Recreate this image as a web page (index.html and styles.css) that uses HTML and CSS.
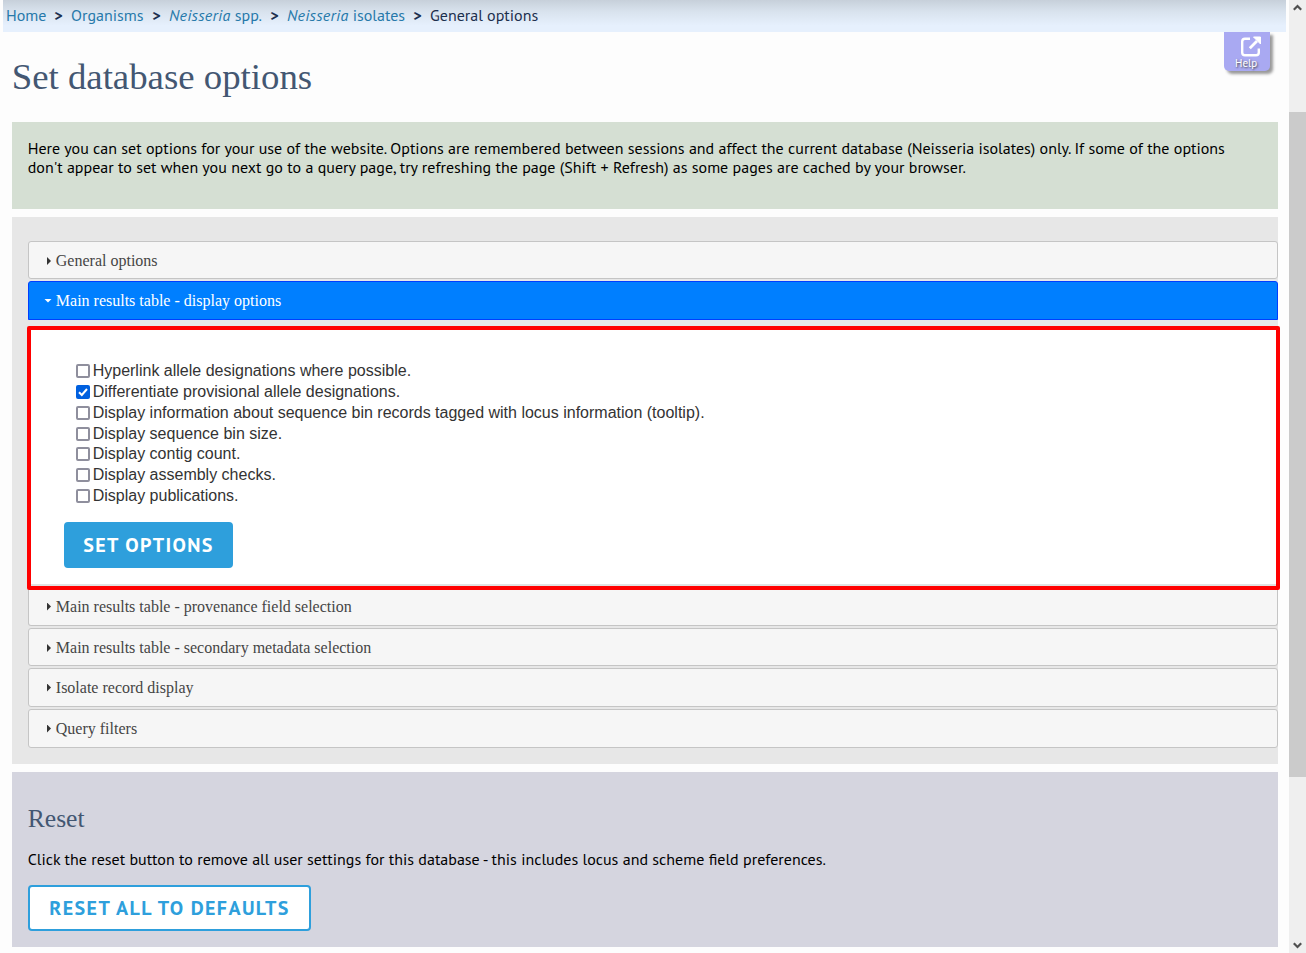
FILE: index.html
```html
<!DOCTYPE html>
<html lang="en">
<head>
<meta charset="utf-8">
<title>Set database options</title>
<link rel="stylesheet" href="styles.css">
</head>
<body>
<div class="page">
  <nav class="breadcrumb">
    <a class="c1">Home</a><b>&gt;</b><a class="c2">Organisms</a><b>&gt;</b><a class="c3"><i>Neisseria</i> spp.</a><b>&gt;</b><a class="c4"><i>Neisseria</i> isolates</a><b>&gt;</b><span class="c5">General options</span>
  </nav>
  <a class="help">
    <svg width="22" height="22" viewBox="0 0 22 22" fill="none" stroke="#fff" stroke-width="2.4"><path d="M10 2.700H5Q2.200 2.700 2.200 5.500v11q0 2.800 2.800 2.800h11q2.800 0 2.800-2.800V12.500"/><path d="M9.800 12.200 17 5" stroke-width="2.800"/><path d="M13.500 1h7v7z" fill="#fff" stroke-width="1" stroke-linejoin="round"/></svg>
    <span>Help</span>
  </a>
  <h1>Set database options</h1>
  <section class="intro">
    <p class="l1">Here you can set options for your use of the website. Options are remembered between sessions and affect the current database (Neisseria isolates) only. If some of the options</p>
    <p class="l2">don't appear to set when you next go to a query page, try refreshing the page (Shift + Refresh) as some pages are cached by your browser.</p>
  </section>
  <section class="options">
    <h3 class="bar"><i class="tri"></i><span>General options</span></h3>
    <h3 class="bar active"><i class="tri down"></i><span>Main results table - display options</span></h3>
    <div class="panel">
      <ul>
        <li><i class="box"></i>Hyperlink allele designations where possible.</li>
        <li><i class="box on"><svg width="14" height="14" viewBox="0 0 14 14"><path d="M3 7.300 5.800 10 11 4" fill="none" stroke="#fff" stroke-width="2"/></svg></i>Differentiate provisional allele designations.</li>
        <li><i class="box"></i>Display information about sequence bin records tagged with locus information (tooltip).</li>
        <li><i class="box"></i>Display sequence bin size.</li>
        <li><i class="box"></i>Display contig count.</li>
        <li><i class="box"></i>Display assembly checks.</li>
        <li><i class="box"></i>Display publications.</li>
      </ul>
      <button class="btn set"><span>SET OPTIONS</span></button>
    </div>
    <h3 class="bar cut"><i class="tri"></i><span>Main results table - provenance field selection</span></h3>
    <h3 class="bar"><i class="tri"></i><span>Main results table - secondary metadata selection</span></h3>
    <h3 class="bar tall"><i class="tri"></i><span>Isolate record display</span></h3>
    <h3 class="bar tall"><i class="tri"></i><span>Query filters</span></h3>
  </section>
  <section class="reset">
    <h2>Reset</h2>
    <p class="l3">Click the reset button to remove all user settings for this database - this includes locus and scheme field preferences.</p>
    <button class="btn all"><span>RESET ALL TO DEFAULTS</span></button>
  </section>
</div>
<div class="scrollbar">
  <svg width="17" height="17" viewBox="0 0 17 17"><path d="M4.800 9.800 8.500 6l3.700 3.800" fill="none" stroke="#505050" stroke-width="2.200"/></svg>
  <div class="thumb"></div>
  <svg width="17" height="17" viewBox="0 0 17 17"><path d="M4.800 7.200 8.500 11l3.700-3.800" fill="none" stroke="#505050" stroke-width="2.200"/></svg>
</div>
</body>
</html>
```
FILE: styles.css
```css
* { box-sizing: border-box; }
body { margin: 0; display: flex; width: 1306px; height: 953px; overflow: hidden; background: #fdfdfd; font: 16px/19px "PT Sans", "Noto Sans", sans-serif; color: #000; }
h1, h2, h3, p, ul { margin: 0; padding: 0; font-weight: normal; }
p, .breadcrumb, span { white-space: nowrap; }
p { margin-left: -0.3px; word-spacing: 0.08px; }
.page { position: relative; width: 1289px; height: 953px; flex: none; }
.breadcrumb { display: flex; width: 1283px; height: 32px; margin-left: 3px; padding: 6px 0 0 3px; background: linear-gradient(#c7d0da, #d8e2ed 35%, #e6f0fd 80%); color: #1c2f4e; }
.breadcrumb a { color: #2779aa; }
.breadcrumb a i { letter-spacing: 0.26px; }
.breadcrumb a, .breadcrumb span { flex: none; }
.breadcrumb b { width: 25px; text-align: center; }
.c1 { width: 40px; }
.c2 { width: 73px; }
.c3 { width: 93px; }
.c4 { width: 118px; }
.help { position: absolute; left: 1224px; top: 32px; width: 46px; height: 39px; border-radius: 0 0 5px 5px; background: #a9a9f2; box-shadow: 3px 3px 3px #999; color: #fff; }
.help svg { position: absolute; left: 16px; top: 4px; }
.help span { position: absolute; left: 11px; top: 24px; font-size: 11px; line-height: 14px; text-shadow: 1px 1px 2px #444; }
h1 { height: 90px; padding: 24px 0 0 11.700px; font: 36.800px/42px "Liberation Serif", serif; color: #435772; }
section { width: 1266px; margin-left: 12px; padding-left: 16px; }
.intro { height: 87px; padding-top: 17px; background: #d5dfd3; }
.options { height: 547px; margin-top: 8px; padding-top: 24px; background: #e7e7e7; }
.bar { display: flex; align-items: center; width: 1250px; height: 38px; margin-bottom: 2px; padding: 2px 0 0 16px; border: 1px solid #c5c5c5; border-radius: 3px; background: #f6f6f6; color: #454545; font: 16px/20px "Liberation Serif", serif; }
.bar.active { height: 39px; margin-bottom: 0; padding-top: 0; border-color: #003eff; border-radius: 3px 3px 0 0; background: #007fff; color: #fff; }
.bar.cut { height: 36px; padding-top: 0; padding-bottom: 2px; border-top: 0; border-radius: 0 0 3px 3px; }
.bar.tall { height: 39px; padding-top: 0; }
.tri { flex: none; width: 4px; height: 8px; margin: 0 4.800px 0 2px; background: #333; clip-path: polygon(0 0, 100% 50%, 0 100%); }
.tri.down { width: 8px; height: 4px; margin: 0 3.800px 0 -1px; background: #fff; clip-path: polygon(0 0, 100% 0, 50% 100%); }
.panel { width: 1253px; height: 264px; margin: 6px 0 0 -1px; padding: 31px 0 0 33px; border: 4px solid #f00; border-radius: 2px; background: #fff; box-shadow: inset 0 -2px #e1e2e2; }
ul { height: 161px; padding-left: 12px; list-style: none; font: 16px/20.850px "Liberation Sans", sans-serif; color: #333; }
li { display: flex; align-items: center; height: 20.850px; white-space: nowrap; }
.box { flex: none; width: 14px; height: 14px; margin: 0 2.700px 0.700px 0; border: 2px solid #8f8f9d; border-radius: 2px; }
.box.on { border: 0; background: #0060df; }
.box svg { display: block; }
.btn { display: block; height: 46px; padding: 0; border: 2px solid #2e9fdc; border-radius: 4px; font: bold 20px/42px "PT Sans", "Noto Sans", sans-serif; letter-spacing: 1.400px; text-align: center; }
.set { width: 169px; background: #2e9fdc; color: #fff; }
.all { width: 283px; margin-top: 16px; background: #fff; color: #2e9fdc; }
.reset { height: 175px; margin-top: 8px; padding-top: 32px; background: #d5d5df; }
h2 { height: 46px; margin-left: -0.300px; font: 25.600px/30px "Liberation Serif", serif; color: #435772; }
.scrollbar { display: flex; flex-direction: column; width: 17px; height: 953px; background: #efefef; }
.scrollbar svg { flex: none; }
.thumb { height: 665px; margin: 95px 0 159px; background: #cbcbcb; }
```
